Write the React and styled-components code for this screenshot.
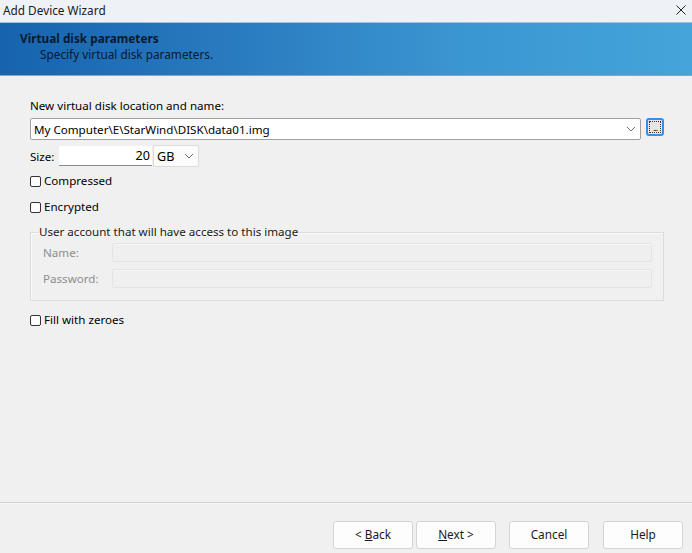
import React from "react";
import styled, { createGlobalStyle } from "styled-components";

const Global = createGlobalStyle`
  html, body { margin: 0; padding: 0; }
  body { background: #f0f0f0; font-family: "Noto Sans", "Open Sans", sans-serif; font-size: 11.6px; color: #000; }
`;

const Window = styled.div`
  width: 692px;
  height: 553px;
  display: flex;
  flex-direction: column;
  background: #f0f0f0;
  overflow: hidden;
`;

const TitleBar = styled.div`
  height: 22px;
  flex: none;
  display: flex;
  align-items: center;
  justify-content: space-between;
  padding: 0 6px 3px 3px;
  background: #eef2f7;
  font-size: 11.8px;
  color: #1a1a1a;
  box-sizing: border-box;
`;

const Close = styled.svg`
  width: 10px;
  height: 10px;
`;

const Banner = styled.div`
  height: 54px;
  flex: none;
  box-sizing: border-box;
  border-top: 1px solid #9fc3e2;
  border-bottom: 1px solid #8ea3b8;
  background: linear-gradient(to right, #1763ae 0%, #2a7cc0 35%, #3a95d0 65%, #45a4da 100%);
  padding: 7px 0 0 20px;
  color: #081a30;
`;

const BannerTitle = styled.div`
  font-weight: bold;
  font-size: 11.8px;
  line-height: 16px;
`;

const BannerSub = styled.div`
  padding-left: 20px;
  font-size: 11.8px;
  line-height: 16px;
`;

const Body = styled.div`
  flex: 1;
  padding: 22px 28px 0 30px;
  display: flex;
  flex-direction: column;
`;

const Label = styled.div`
  line-height: 16px;
  margin-bottom: 4px;
`;

const PathRow = styled.div`
  display: flex;
  align-items: flex-start;
  gap: 5px;
`;

const Combo = styled.div`
  flex: 1;
  height: 22px;
  box-sizing: border-box;
  border: 1px solid #a0a0a0;
  border-radius: 2px;
  background: #fff;
  display: flex;
  align-items: center;
  justify-content: space-between;
  padding: 0 4px 0 3px;
`;

const Chevron = styled.svg`
  width: 10px;
  height: 6px;
  flex: none;
`;

const Browse = styled.div`
  width: 18px;
  height: 18px;
  box-sizing: border-box;
  border: 2px solid #3b8de0;
  border-radius: 3px;
  background: #e6e6e6;
  display: flex;
  align-items: center;
  justify-content: center;
  padding: 1px;
`;

const BrowseInner = styled.div`
  width: 100%;
  height: 100%;
  box-sizing: border-box;
  border: 1px dotted #333;
  font-size: 9px;
  line-height: 9px;
  display: flex;
  align-items: flex-end;
  justify-content: center;
  letter-spacing: -1px;
`;

const SizeRow = styled.div`
  display: flex;
  align-items: center;
  margin-top: 5px;
  height: 22px;
`;

const SizeLabel = styled.span`
  width: 29px;
`;

const NumInput = styled.div`
  width: 93px;
  height: 20px;
  box-sizing: border-box;
  background: #fff;
  border-bottom: 1px solid #8a8a8a;
  text-align: right;
  padding-right: 2px;
  line-height: 20px;
  font-size: 12.6px;
`;

const UnitSelect = styled.div`
  width: 46px;
  height: 22px;
  margin-left: 1px;
  box-sizing: border-box;
  border: 1px solid #dadada;
  border-radius: 2px;
  background: #fbfbfb;
  display: flex;
  align-items: center;
  justify-content: space-between;
  padding: 0 4px 0 3px;
  font-size: 12.6px;
`;

const Check = styled.label`
  display: flex;
  align-items: center;
  gap: 3px;
  line-height: 16px;
  margin-top: ${p => p.$mt}px;
`;

const Box = styled.span`
  width: 11px;
  height: 11px;
  border: 1px solid #333;
  border-radius: 2px;
  background: #fff;
  box-sizing: border-box;
  display: inline-block;
`;

const Group = styled.fieldset`
  margin: 10px 0 0 0;
  padding: 0 11px 12px 12px;
  border: 1px solid #dcdcdc;
  box-shadow: inset 1px 1px 0 #fafafa;
  border-radius: 0;
  min-width: 0;
`;

const Legend = styled.legend`
  padding: 0 1px;
  margin-left: -5px;
  line-height: 14px;
  color: #1a1a1a;
`;

const GroupRow = styled.div`
  display: flex;
  align-items: center;
  height: 20px;
  margin-top: ${p => p.$mt}px;
`;

const DisabledLabel = styled.span`
  width: 69px;
  color: #8d8d8d;
`;

const DisabledInput = styled.div`
  flex: 1;
  height: 19px;
  box-sizing: border-box;
  border: 1px solid #e4e4e4;
  border-radius: 2px;
  background: #efefef;
  box-shadow: inset 0 1px 0 #f7f7f7;
`;

const Spacer = styled.div`
  flex: 1;
`;

const Separator = styled.div`
  height: 2px;
  flex: none;
  background: #cfcfcf;
  border-bottom: 1px solid #f7f7f7;
  box-sizing: border-box;
`;

const Footer = styled.div`
  height: 49px;
  flex: none;
  display: flex;
  align-items: flex-start;
  padding: 17px 9px 0 0;
  box-sizing: border-box;
  justify-content: flex-end;
`;

const Btn = styled.button`
  width: 80px;
  height: 28px;
  margin-left: ${p => p.$ml}px;
  box-sizing: border-box;
  border: 1px solid #d4d4d4;
  border-radius: 3px;
  background: #fdfdfd;
  font-family: inherit;
  font-size: 11.8px;
  line-height: 14px;
  color: #1a1a1a;
  padding: 0 0 2px 0;
`;

const U = styled.span`
  text-decoration: underline;
`;

const ChevronIcon = ({ color = "#707070" }) => (
  <Chevron viewBox="0 0 10 6">
    <path d="M1 1 L5 5 L9 1" fill="none" stroke={color} strokeWidth="1" />
  </Chevron>
);

export default function App() {
  return (
    <Window>
      <Global />
      <TitleBar>
        <span>Add Device Wizard</span>
        <Close viewBox="0 0 10 10">
          <path d="M0.5 0.5 L9.5 9.5 M9.5 0.5 L0.5 9.5" stroke="#222" strokeWidth="1" />
        </Close>
      </TitleBar>
      <Banner>
        <BannerTitle>Virtual disk parameters</BannerTitle>
        <BannerSub>Specify virtual disk parameters.</BannerSub>
      </Banner>
      <Body>
        <Label>New virtual disk location and name:</Label>
        <PathRow>
          <Combo>
            <span>My Computer\E\StarWind\DISK\data01.img</span>
            <ChevronIcon />
          </Combo>
          <Browse>
            <BrowseInner>...</BrowseInner>
          </Browse>
        </PathRow>
        <SizeRow>
          <SizeLabel>Size:</SizeLabel>
          <NumInput>20</NumInput>
          <UnitSelect>
            <span>GB</span>
            <ChevronIcon />
          </UnitSelect>
        </SizeRow>
        <Check $mt={6}>
          <Box />
          Compressed
        </Check>
        <Check $mt={10}>
          <Box />
          Encrypted
        </Check>
        <Group>
          <Legend>User account that will have access to this image</Legend>
          <GroupRow $mt={3}>
            <DisabledLabel>Name:</DisabledLabel>
            <DisabledInput />
          </GroupRow>
          <GroupRow $mt={6}>
            <DisabledLabel>Password:</DisabledLabel>
            <DisabledInput />
          </GroupRow>
        </Group>
        <Check $mt={11}>
          <Box />
          Fill with zeroes
        </Check>
        <Spacer />
      </Body>
      <Separator />
      <Footer>
        <Btn $ml={0}>&lt; <U>B</U>ack</Btn>
        <Btn $ml={3}><U>N</U>ext &gt;</Btn>
        <Btn $ml={13}>Cancel</Btn>
        <Btn $ml={14}>Help</Btn>
      </Footer>
    </Window>
  );
}
